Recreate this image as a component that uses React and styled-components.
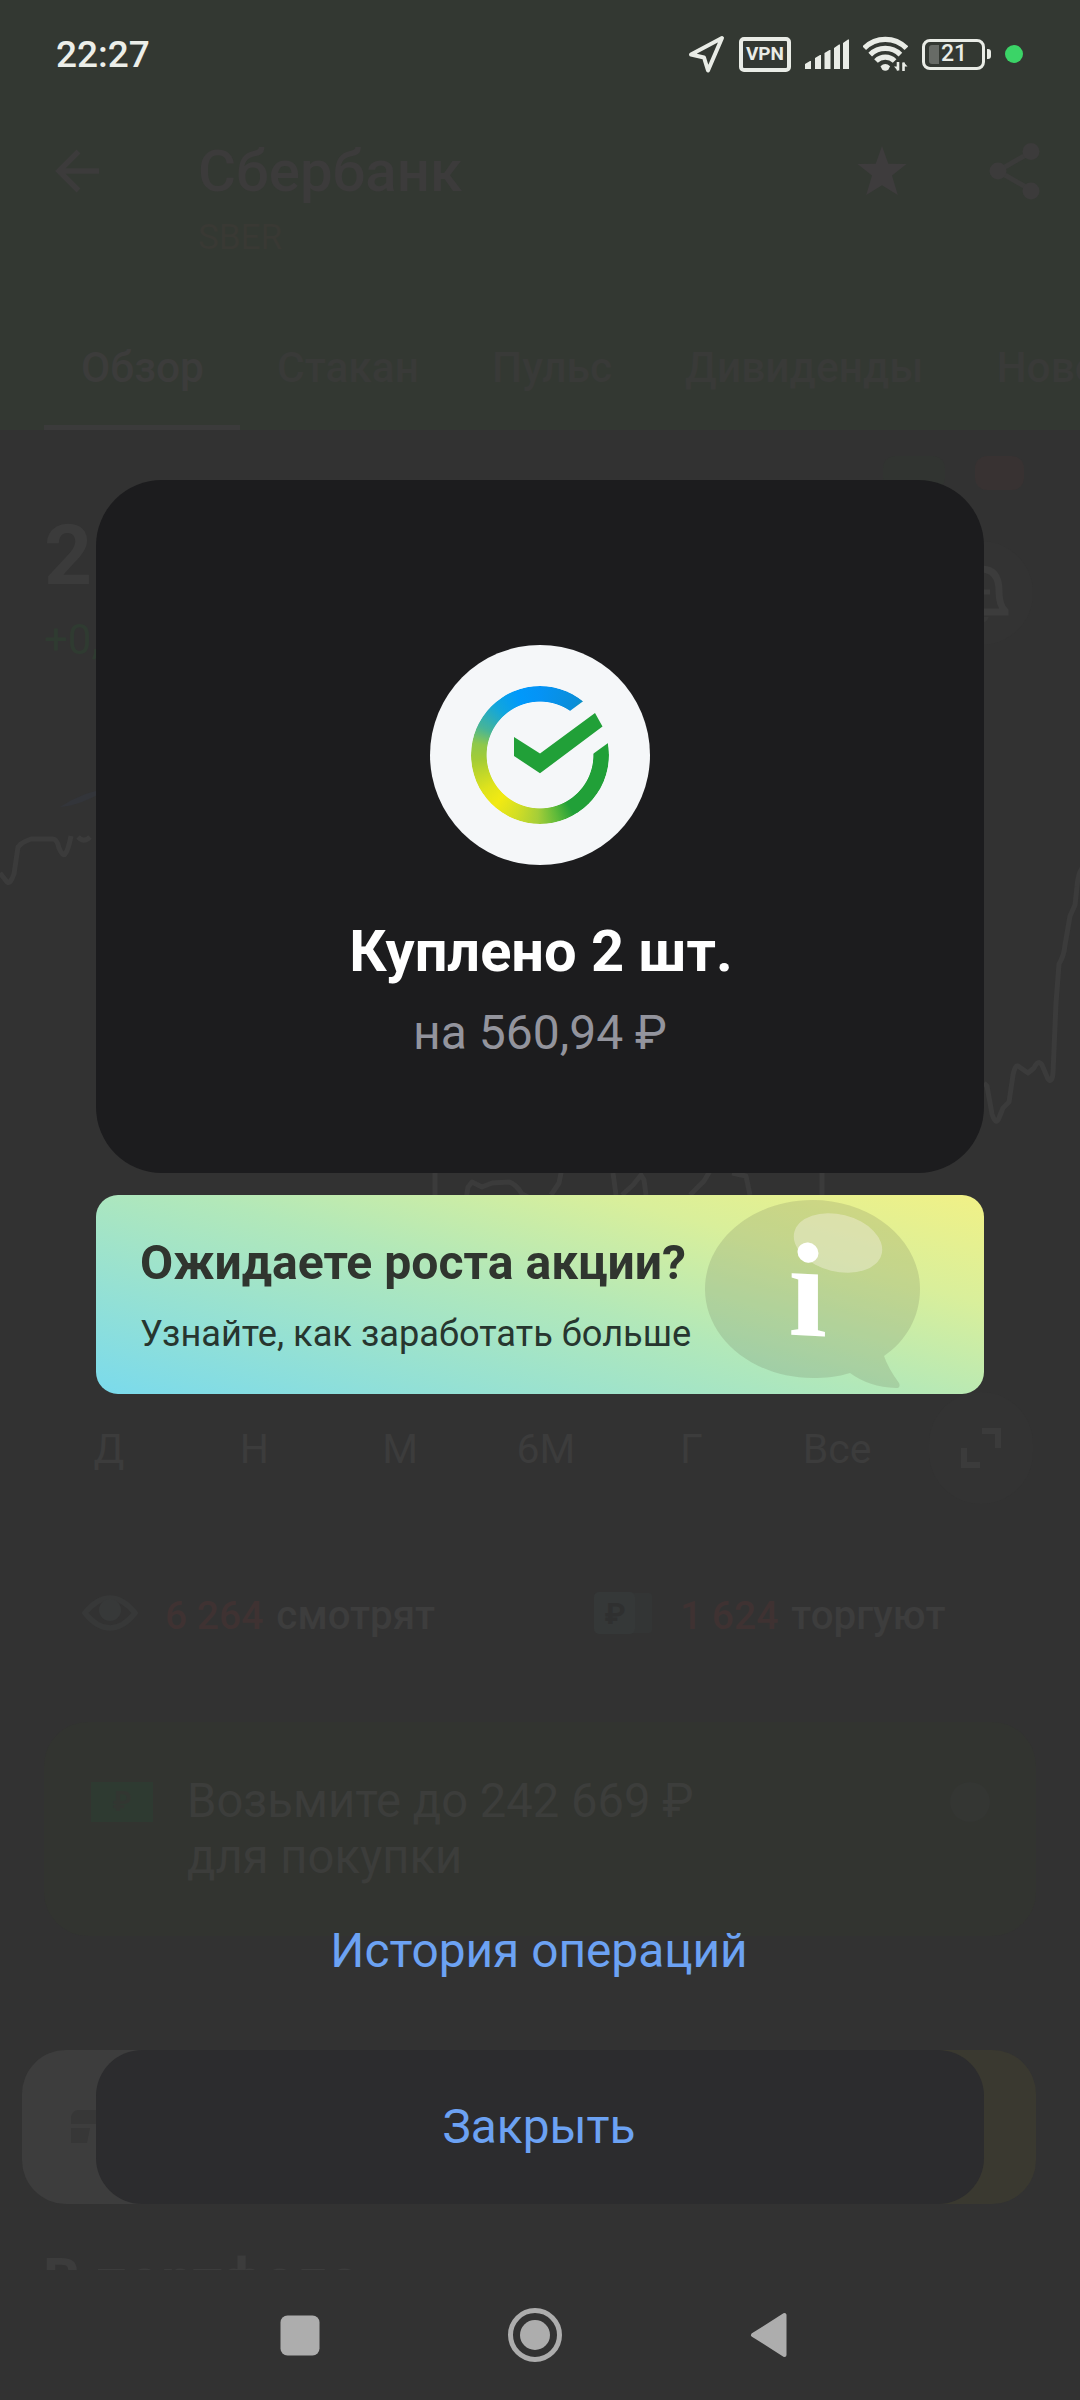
import React from "react";
import styled, { createGlobalStyle } from "styled-components";

const GlobalStyle = createGlobalStyle`
  * { box-sizing: border-box; }
  html, body { margin: 0; padding: 0; background: #323232; }
  body { font-family: Roboto, "Noto Sans", sans-serif; width: 1080px; height: 2400px; overflow: hidden; }
  svg { display: block; flex: none; }
`;

const Screen = styled.div`
  position: relative;
  width: 1080px;
  height: 2400px;
  display: flex;
  flex-direction: column;
  background: #323232;
  overflow: hidden;
  white-space: nowrap;
`;

const Header = styled.header`
  height: 430px;
  flex: none;
  background: #333832;
`;

const StatusBar = styled.div`
  height: 108px;
  padding: 0 57px 0 56px;
  display: flex;
  align-items: center;
  justify-content: space-between;
`;

const Clock = styled.time`
  font-size: 37px;
  font-weight: 500;
  line-height: 44px;
  padding-top: 2px;
  color: #eceee9;
`;

const StatusIcons = styled.div`
  display: flex;
  align-items: center;
  gap: 14px;
`;

const VpnBadge = styled.div`
  width: 52px;
  height: 35px;
  border: 4px solid #e9ece6;
  border-radius: 5px;
  display: flex;
  align-items: center;
  justify-content: center;
  font-size: 19px;
  font-weight: 700;
  line-height: 20px;
  color: #e9ece6;
`;

const Battery = styled.div`
  width: 69px;
  display: flex;
  align-items: center;
  gap: 2px;
`;

const BatteryCase = styled.div`
  width: 63px;
  height: 31px;
  border: 3px solid #e9ece6;
  border-radius: 8px;
  display: flex;
  align-items: center;
  padding-left: 4px;
  gap: 2px;
  font-size: 23px;
  font-weight: 500;
  line-height: 24px;
  color: #e9ece6;
`;

const BatteryLevel = styled.div`
  width: 10px;
  height: 19px;
  border-radius: 3px 0 0 3px;
  background: #676b66;
`;

const BatteryTip = styled.div`
  width: 4px;
  height: 10px;
  border-radius: 0 3px 3px 0;
  background: #e9ece6;
`;

const PrivacyDot = styled.div`
  width: 18px;
  height: 18px;
  border-radius: 50%;
  background: #3bd467;
`;

const TitleRow = styled.div`
  height: 202px;
  display: flex;
  padding: 29px 38px 0 54px;
`;

const IconSlot = styled.div`
  width: ${(p) => p.$width}px;
  height: 68px;
  display: flex;
  align-items: center;
`;

const TitleBlock = styled.div`
  flex: 1;
`;

const CompanyName = styled.div`
  font-size: 58.2px;
  font-weight: 500;
  line-height: 68px;
  color: #3c3b3b;
`;

const Ticker = styled.div`
  margin-top: 13px;
  font-size: 35px;
  line-height: 40px;
  color: #393934;
`;

const Tabs = styled.nav`
  height: 121px;
  padding-left: 44px;
  display: flex;
  overflow: hidden;
`;

const Tab = styled.div`
  flex: none;
  height: 120px;
  padding: 0 36px 0 37px;
  font-size: 42.5px;
  font-weight: 500;
  line-height: 116px;
  color: ${(p) => (p.$active ? "#3c3c3b" : "#393a38")};
  border-bottom: ${(p) => (p.$active ? "5px solid #3b3b3b" : "0")};
`;

const BadgeRow = styled.div`
  height: 71px;
  flex: none;
  padding: 26px 56px 0 0;
  display: flex;
  justify-content: flex-end;
  gap: 30px;
`;

const TrendBadge = styled.div`
  width: ${(p) => p.$width}px;
  height: 34px;
  border-radius: 12px;
  background: ${(p) => p.$color};
`;

const QuoteRow = styled.section`
  height: 180px;
  flex: none;
  padding: 5px 47px 0 44px;
  display: flex;
  justify-content: space-between;
`;

const Price = styled.div`
  font-size: 84px;
  font-weight: 700;
  line-height: 100px;
  color: #3b3b3b;
`;

const Change = styled.div`
  margin-top: 10px;
  font-size: 42px;
  line-height: 48px;
  color: #2f3b31;
`;

const RoundButton = styled.div`
  width: 104px;
  height: ${(p) => p.$height || 104}px;
  margin-top: ${(p) => p.$top || 0}px;
  border-radius: 52px;
  background: #333333;
  display: flex;
  align-items: center;
  justify-content: center;
`;

const ChartArea = styled.section`
  height: 711px;
  flex: none;
`;

const PeriodRow = styled.section`
  height: 112px;
  flex: none;
  padding: 0 47px 0 36px;
  display: flex;
  justify-content: space-between;
`;

const Periods = styled.div`
  width: 874px;
  display: grid;
  grid-template-columns: repeat(6, 1fr);
  border-radius: 56px;
`;

const Period = styled.div`
  text-align: center;
  font-size: 41px;
  line-height: 115px;
  color: #3c3c3c;
`;

const Stats = styled.section`
  height: 218px;
  flex: none;
  display: grid;
  grid-template-columns: 514px 1fr;
  padding-left: 80px;
  align-items: center;
`;

const Stat = styled.div`
  display: flex;
  align-items: center;
  font-size: 39px;
  font-weight: 500;
  line-height: 48px;
  color: #3d3d3d;
`;

const StatCount = styled.span`
  margin-left: ${(p) => p.$gap}px;
  margin-right: 13px;
  padding-top: 6px;
  color: #3f3232;
`;

const StatLabel = styled.span`
  padding-top: 6px;
  font-size: 40.3px;
`;

const Offer = styled.section`
  height: 214px;
  flex: none;
  margin: 0 44px;
  padding: 51px 46px 0 47px;
  border-radius: 44px;
  background: #323430;
  display: flex;
  align-items: flex-start;
`;

const Banknote = styled.div`
  width: 62px;
  height: 40px;
  margin-top: 9px;
  background: #2e3a31;
  display: flex;
  align-items: center;
  justify-content: center;
  font-size: 27px;
  font-weight: 700;
  color: #323631;
`;

const OfferText = styled.div`
  flex: 1;
  margin-left: 34px;
  font-size: 47.2px;
  line-height: 56px;
  color: #3c3d3b;
`;

const OfferHint = styled.div`
  width: 40px;
  height: 40px;
  margin-top: 9px;
  border-radius: 50%;
  background: #343633;
`;

const TradeRow = styled.section`
  height: 154px;
  flex: none;
  margin: 114px 44px 0 22px;
  display: flex;
  border-radius: 44px;
  overflow: hidden;
`;

const TradeSide = styled.div`
  flex: 1;
  padding-left: 49px;
  background: ${(p) => p.$color};
  display: flex;
  align-items: center;
`;

const PortfolioHeading = styled.div`
  height: 66px;
  flex: none;
  overflow: hidden;
  padding: 42px 0 0 43px;
  font-size: 58.5px;
  font-weight: 700;
  line-height: 68px;
  color: #3c3c3c;
`;

const NavBar = styled.nav`
  height: 130px;
  flex: none;
  padding: 0 292px 0 280px;
  display: flex;
  align-items: center;
  justify-content: space-between;
`;

const ResultLayer = styled.div`
  position: absolute;
  inset: 0 0 130px 0;
  padding: 480px 96px 0;
  display: flex;
  flex-direction: column;
`;

const ResultCard = styled.section`
  height: 693px;
  padding-top: 165px;
  border-radius: 66px;
  background: #1c1c1e;
  display: flex;
  flex-direction: column;
  align-items: center;
`;

const Logo = styled.div`
  width: 220px;
  height: 220px;
  border-radius: 50%;
  background: #f5f7f9;
  display: grid;
  place-items: center;
  & > * { grid-area: 1 / 1; }
`;

const LogoRing = styled.div`
  width: 138px;
  height: 138px;
  border-radius: 50%;
  background: conic-gradient(
    #0593f5 0deg, #0a8ed8 35deg, #21a038 60deg, #21a038 150deg, #5fba3a 165deg,
    #a5ce38 182deg, #d3de24 202deg, #f2ea12 222deg, #dfe31c 238deg, #a3cc36 266deg,
    #8fc84a 280deg, #48b596 295deg, #12a6dc 318deg, #0099fb 340deg, #0593f5 360deg
  );
  mask: radial-gradient(circle, transparent 53px, #000 53.8px);
`;

const LogoCheck = styled.svg`
  z-index: 1;
`;

const ResultTitle = styled.h1`
  margin: 51px 0 0;
  padding-left: 2px;
  font-size: 57.8px;
  font-weight: 700;
  line-height: 70px;
  color: #ffffff;
`;

const ResultAmount = styled.div`
  margin-top: 19px;
  font-size: 48px;
  line-height: 56px;
  color: #93949d;
`;

const Promo = styled.section`
  height: 199px;
  margin-top: 22px;
  padding: 0 54px 0 44px;
  border-radius: 22px;
  background: linear-gradient(16deg, #7adaec, #b2e8b9 50%, #d9ef9b 76%, #f1f186);
  display: flex;
  justify-content: space-between;
`;

const PromoText = styled.div`
  width: 556px;
  padding-top: 40px;
`;

const PromoTitle = styled.div`
  font-size: 48.1px;
  font-weight: 700;
  line-height: 56px;
  color: #30352f;
`;

const PromoCaption = styled.div`
  margin-top: 21px;
  font-size: 36.2px;
  line-height: 44px;
  color: #27362f;
`;

const BubbleInfo = styled.text`
  font-family: "Liberation Serif", serif;
  font-weight: 700;
  font-size: 134px;
  fill: #ffffff;
`;

const Action = styled.button`
  height: 154px;
  margin: ${(p) => p.$top}px 0 0;
  padding: 0 2px 0 0;
  border: 0;
  border-radius: 46px;
  background: ${(p) => (p.$filled ? "#2c2c2e" : "transparent")};
  font-family: inherit;
  font-size: 47.8px;
  line-height: 56px;
  color: #6ca2f3;
`;

const periods = ["Д", "Н", "М", "6М", "Г", "Все"];
const tabs = ["Обзор", "Стакан", "Пульс", "Дивиденды", "Новости"];

const LocationIcon = () => (
  <svg width="37" height="38" viewBox="0 0 37 38">
    <path d="M34 3 3 19.5 16 22.5 20 35.5Z" fill="none" stroke="#e9ece6" strokeWidth="4" strokeLinejoin="round" />
  </svg>
);

const SignalIcon = () => (
  <svg width="44" height="30" viewBox="0 0 44 30" fill="#e9ece6">
    <path d="M0 25l5-3h1v8H0zM10 19l5-3h1v14h-6zM19.5 14l5-3h1v19h-6zM29 9l5-3.5h1V30h-6zM38 4l5-3.5h1V30h-6z" />
  </svg>
);

const WifiIcon = () => (
  <svg width="45" height="38" viewBox="0 0 45 38">
    <g fill="none" stroke="#e9ece6" strokeWidth="5.2">
      <path d="M1.2 13.2a29.5 29.5 0 0 1 42.2 0" />
      <path d="M7.2 19.600a21.500 21.500 0 0 1 30.200 0" />
      <path d="M13 26a13.300 13.300 0 0 1 18.600 0" />
    </g>
    <path d="M17.500 31.200q4.800-4.200 9.600 0l-1.800 3.500q-3 2-6 0z" fill="#e9ece6" />
    <path d="M35 27v8.500M40.500 36v-8.500" stroke="#e9ece6" strokeWidth="2.600" />
    <path d="M31 31.500h4v4.500zM44.500 31.500h-4V27z" fill="#e9ece6" />
  </svg>
);

const BackIcon = () => (
  <svg width="48" height="48" viewBox="0 0 48 48" fill="none" stroke="#3c3b3b" strokeWidth="5.500">
    <path d="M45 24H6M24.500 4.500 5 24l19.500 19.500" />
  </svg>
);

const StarIcon = () => (
  <svg width="52" height="52" viewBox="0 0 52 52" fill="#3e3c3d">
    <path d="M26 1l6.300 17.700 18.200.4-14.500 11.300L41.800 50 26 40.200 10.200 50 16 30.400 1.500 19.100l18.200-.4z" />
  </svg>
);

const ShareIcon = () => (
  <svg width="54" height="58" viewBox="0 0 54 58">
    <path d="M43 10 10 29l33 19" fill="none" stroke="#3b3b3a" strokeWidth="5" />
    <g fill="#3c3b3b">
      <circle cx="43" cy="9.500" r="8.500" />
      <circle cx="10" cy="29" r="8.500" />
      <circle cx="43" cy="49" r="8.500" />
    </g>
  </svg>
);

const BellIcon = () => (
  <svg width="60" height="62" viewBox="0 0 60 62">
    <path d="M6 50V49q6-6 6-20Q12 7 30 7t18 22q0 14 6 20v1z" fill="none" stroke="#3c3c3c" strokeWidth="7" />
    <path d="M30 21v18M21 30h18" stroke="#3c3c3c" strokeWidth="5" />
    <path d="M23 55h15q-3 6-7.500 6T23 55" fill="#383838" />
  </svg>
);

const ExpandIcon = () => (
  <svg width="42" height="42" viewBox="0 0 42 42" fill="none" stroke="#3b3b3b" strokeWidth="6">
    <path d="M22 4h16v17M4 21v17h16" />
  </svg>
);

const EyeIcon = () => (
  <svg width="60" height="38" viewBox="0 0 60 38">
    <path d="M5 19q12-15 25-15t25 15Q43 34 30 34T5 19z" fill="none" stroke="#373838" strokeWidth="5.500" />
    <circle cx="30" cy="16" r="11" fill="#373939" />
  </svg>
);

const RubleNoteIcon = () => (
  <svg width="58" height="42" viewBox="0 0 58 42">
    <rect x="20" y="1" width="38" height="40" rx="3" fill="#333535" />
    <rect width="41" height="42" rx="5" fill="#353838" />
    <text x="21" y="32" textAnchor="middle" fontFamily="Roboto" fontWeight="700" fontSize="30" fill="#2f3030">₽</text>
  </svg>
);

const PriceChart = () => (
  <svg width="1080" height="711" viewBox="0 681 1080 711" fill="none" stroke="#3b3b3b" strokeWidth="5" strokeLinejoin="round">
    <path d="M60 807Q80 806 110 788Q84 791 60 807Z" fill="#33353a" stroke="none" />
    <path d="M0 873l7 9q3 3 7-8l4-27q3-4 8-6l5-2h22q4 0 6 9 4 9 6 6 3-3 6-18M78 837q6 6 12 0" />
    <path d="M435 1150v45M466 1200l2-13 4-5 10 5 10-4 17-1q7 2 13 12l12 6M551 1195l8-12 4-20M613 1173l3 22M622 1195l11-10 8-10 3 5 2 15M690 1195l14-14 6-10M732 1173l14 3 4 19M822 1160v40" />
    <path d="M984 1083l3 3 5 28q4 12 7 4l4-10 6-6 4-27q2-10 5-9l10 7 6-5q4-9 8-3l6 14q4 5 5-6l3-70 3-39q5-8 6-19l5-29 5-11 2-18q1-14 6-20" />
  </svg>
);

const PromoBubble = () => (
  <svg width="230" height="199" viewBox="700 1195 230 199">
    <path
      d="M812.500 1200C872 1200 920 1240 920 1289C920 1317 906 1341 884 1356Q888 1368 899 1383Q901 1388 896 1388Q869 1387 850 1373C838 1377 825 1378 812.500 1378C753 1378 705 1338 705 1289S753 1200 812.500 1200Z"
      fill="rgba(106,112,85,.2)"
    />
    <ellipse cx="838" cy="1243" rx="45" ry="28.500" transform="rotate(14 838 1243)" fill="rgba(250,244,235,.38)" />
    <BubbleInfo x="0" y="0" textAnchor="middle" transform="translate(807.5 1335.500) skewY(3) scale(1.04 1)">i</BubbleInfo>
  </svg>
);

const LogoMark = () => (
  <LogoCheck width="220" height="220" viewBox="430 645 220 220">
    <path d="M601 688 556 721.300 575 767 628 728.500Z" fill="#f5f7f9" />
    <path d="M514 737V756L540 773.300 602.500 726.500 595 713 540 753.500Z" fill="#21a038" />
  </LogoCheck>
);

export default function App() {
  return (
    <>
      <GlobalStyle />
      <Screen>
        <Header>
          <StatusBar>
            <Clock>22:27</Clock>
            <StatusIcons>
              <LocationIcon />
              <VpnBadge>VPN</VpnBadge>
              <SignalIcon />
              <WifiIcon />
              <Battery>
                <BatteryCase>
                  <BatteryLevel />
                  21
                </BatteryCase>
                <BatteryTip />
              </Battery>
              <PrivacyDot />
            </StatusIcons>
          </StatusBar>
          <TitleRow>
            <IconSlot $width={144}><BackIcon /></IconSlot>
            <TitleBlock>
              <CompanyName>Сбербанк</CompanyName>
              <Ticker>SBER</Ticker>
            </TitleBlock>
            <IconSlot $width={132}><StarIcon /></IconSlot>
            <IconSlot $width={54}><ShareIcon /></IconSlot>
          </TitleRow>
          <Tabs>
            {tabs.map((name, i) => (
              <Tab key={name} $active={i === 0}>{name}</Tab>
            ))}
          </Tabs>
        </Header>
        <BadgeRow>
          <TrendBadge $width={62} $color="#313431" />
          <TrendBadge $width={49} $color="#383232" />
        </BadgeRow>
        <QuoteRow>
          <div>
            <Price>280,47</Price>
            <Change>+0,58</Change>
          </div>
          <RoundButton $top={35}><BellIcon /></RoundButton>
        </QuoteRow>
        <ChartArea><PriceChart /></ChartArea>
        <PeriodRow>
          <Periods>
            {periods.map((name) => (
              <Period key={name}>{name}</Period>
            ))}
          </Periods>
          <RoundButton $height={112}><ExpandIcon /></RoundButton>
        </PeriodRow>
        <Stats>
          <Stat>
            <EyeIcon />
            <StatCount $gap={25}>6 264</StatCount>
            <StatLabel>смотрят</StatLabel>
          </Stat>
          <Stat>
            <RubleNoteIcon />
            <StatCount $gap={28}>1 624</StatCount>
            <StatLabel>торгуют</StatLabel>
          </Stat>
        </Stats>
        <Offer>
          <Banknote>₽</Banknote>
          <OfferText>
            Возьмите до 242 669 ₽<br />
            для покупки
          </OfferText>
          <OfferHint />
        </Offer>
        <TradeRow>
          <TradeSide $color="#3d3d3d">
            <svg width="40" height="36" viewBox="0 0 40 36" fill="#373737">
              <path d="M7 1h33v14H0V8q1-6 7-7zM0 19h19l-3 15H0z" />
            </svg>
          </TradeSide>
          <TradeSide $color="#3a3930" />
        </TradeRow>
        <PortfolioHeading>В портфеле</PortfolioHeading>
        <NavBar>
          <svg width="40" height="41" viewBox="0 0 40 41"><rect x=".5" y=".5" width="39" height="40" rx="7" fill="#adadad" /></svg>
          <svg width="56" height="56" viewBox="0 0 56 56">
            <circle cx="28" cy="28" r="24.500" fill="none" stroke="#adadad" strokeWidth="5" />
            <circle cx="28" cy="28" r="15" fill="#adadad" />
          </svg>
          <svg width="38" height="46" viewBox="0 0 38 46">
            <path d="M3 23 34.500 3V43Z" fill="#adadad" stroke="#adadad" strokeWidth="4" strokeLinejoin="round" />
          </svg>
        </NavBar>
        <ResultLayer>
          <ResultCard>
            <Logo>
              <LogoRing />
              <LogoMark />
            </Logo>
            <ResultTitle>Куплено 2 шт.</ResultTitle>
            <ResultAmount>на 560,94 ₽</ResultAmount>
          </ResultCard>
          <Promo>
            <PromoText>
              <PromoTitle>Ожидаете роста акции?</PromoTitle>
              <PromoCaption>Узнайте, как заработать больше</PromoCaption>
            </PromoText>
            <PromoBubble />
          </Promo>
          <Action $top={480}>История операций</Action>
          <Action $top={22} $filled>Закрыть</Action>
        </ResultLayer>
      </Screen>
    </>
  );
}
